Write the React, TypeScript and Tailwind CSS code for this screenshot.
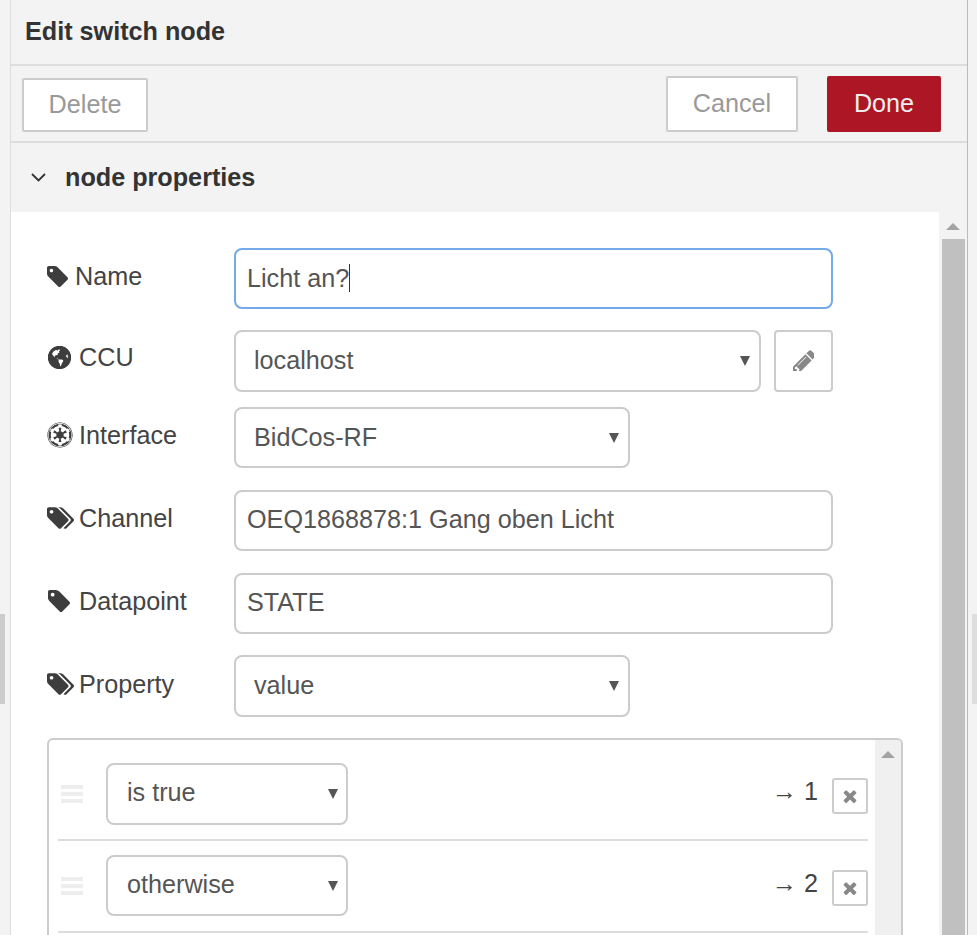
import React from 'react';
import { FaGlobeAmericas, FaEmpire } from 'react-icons/fa';

const TagIcon = ({ className }: { className: string }) => (
  <svg viewBox="128 128 1515 1515" className={className} fill="currentColor">
    <path d="M576 448q0-53-37.5-90.5t-90.5-37.5-90.5 37.5-37.5 90.5 37.5 90.5 90.5 37.5 90.5-37.5 37.5-90.5zm1067 576q0 53-37 90l-491 492q-39 37-91 37-53 0-90-37l-715-716q-38-37-64.5-101t-26.5-117v-416q0-52 38-90t90-38h416q53 0 117 26.5t102 64.5l715 714q37 39 37 91z" />
  </svg>
);

const TagsIcon = ({ className }: { className: string }) => (
  <svg viewBox="-64 128 1899 1515" className={className} fill="currentColor">
    <path d="M384 448q0-53-37.5-90.5t-90.5-37.5-90.5 37.5-37.5 90.5 37.5 90.5 90.5 37.5 90.5-37.5 37.5-90.5zm1067 576q0 53-37 90l-491 492q-39 37-91 37-53 0-90-37l-715-716q-38-37-64.5-101t-26.5-117v-416q0-52 38-90t90-38h416q53 0 117 26.5t102 64.5l715 714q37 39 37 91zm384 0q0 53-37 90l-491 492q-38 38-91 38-36 0-59-14t-53-45l470-470q37-37 37-90 0-52-37-91l-715-714q-38-38-102-64.5t-117-26.5h224q53 0 117 26.5t102 64.5l715 714q37 39 37 91z" />
  </svg>
);

const PencilIcon = () => (
  <svg viewBox="128 128 1408 1408" className="w-[21px] h-[21px] mb-[2px]" fill="currentColor">
    <path d="M491 1536l91-91-235-235-91 91v107h128v128h107zm523-928q0-22-22-22-10 0-17 7l-542 542q-7 7-7 17 0 22 22 22 10 0 17-7l542-542q7-7 7-17zm-54-192l416 416-832 832h-416v-416zm683 96q0 53-37 90l-166 166-416-416 166-165q36-38 90-38 53 0 91 38l235 234q37 39 37 91z" />
  </svg>
);

const TimesIcon = () => (
  <svg viewBox="238 238 1316 1316" className="w-[14px] h-[14px]" fill="currentColor">
    <path d="M1490 1322q0 40-28 68l-136 136q-28 28-68 28t-68-28l-294-294-294 294q-28 28-68 28t-68-28l-136-136q-28-28-28-68t28-68l294-294-294-294q-28-28-28-68t28-68l136-136q28-28 68-28t68 28l294 294 294-294q28-28 68-28t68 28l136 136q28 28 28 68t-28 68l-294 294 294 294q28 28 28 68z" />
  </svg>
);

const Arrow = ({ size = 'big' }: { size?: 'big' | 'small' }) => (
  <span
    className={`absolute border-x-[5px] border-t-[10px] border-x-transparent border-t-[#555] ${
      size === 'big' ? 'right-[9px] top-[24px]' : 'right-[8px] top-[24px]'
    }`}
  />
);

const Select = ({ value, className }: { value: string; className: string }) => (
  <div className={`relative bg-white border-2 border-[#ccc] rounded-[8px] text-[#555] text-[25.2px] leading-[56px] ${className}`}>
    {value}
    <Arrow />
  </div>
);

const Row = ({ icon, label, labelClass, className, children }: any) => (
  <div className={`flex ${className}`}>
    <label className={`w-[187px] flex items-center text-[#444] text-[25.2px] leading-[28px] h-[28px] ${labelClass}`}>
      {icon}
      {label}
    </label>
    {children}
  </div>
);

const RuleRow = ({ value, port, className, selectClass }: { value: string; port: number; className: string; selectClass: string }) => (
  <div className={`flex items-start border-b-2 border-[#ddd] ${className}`}>
    {/* drag handle */}
    <div className="w-[22px] ml-[3px] mt-[22px] flex flex-col gap-[3px]">
      <div className="h-[4px] bg-[#eee]" />
      <div className="h-[4px] bg-[#eee]" />
      <div className="h-[4px] bg-[#eee]" />
    </div>
    <div className={`relative ml-[23px] w-[242px] bg-white border-2 border-[#ccc] rounded-[8px] pl-[19px] text-[#555] text-[25.2px] leading-[54px] ${selectClass}`}>
      {value}
      <Arrow size="small" />
    </div>
    <div className="ml-auto flex items-start">
      <span className="mt-[10px] text-[#444] text-[25.2px] leading-[36px]">→ {port}</span>
      <div className="ml-[14px] mt-[15px] w-[36px] h-[36px] bg-white border-2 border-[#ccc] rounded-[3px] flex items-center justify-center text-[#888]">
        <TimesIcon />
      </div>
    </div>
  </div>
);

export default function App() {
  return (
    <div className="relative h-[935px] overflow-hidden bg-[#f3f3f3] font-['Liberation_Sans',Arial,sans-serif] flex">
      {/* resize handles either side of the tray */}
      <div className="absolute left-0 top-[614px] w-[5px] h-[90px] bg-[#ccc]" />
      <div className="absolute right-0 top-[614px] w-[5px] h-[90px] bg-[#ddd]" />

      <div className="ml-[10px] w-[958px] h-[935px] border-l border-l-[#ddd] border-r border-r-[#bbb] flex flex-col">
        <div className="h-[66px] border-b-2 border-[#ddd] pl-[14px] pt-[16px] text-[#333] text-[25.2px] leading-[30px] font-bold">
          Edit switch node
        </div>

        <div className="h-[77px] border-b-2 border-[#ddd] flex pl-[11px] pr-[26px]">
          <button className="mt-[12px] w-[126px] h-[54px] bg-white border-2 border-[#ccc] rounded-[2px] text-[#999] text-[25.2px]">Delete</button>
          <button className="ml-auto mt-[10px] w-[132px] h-[56px] bg-white border-2 border-[#ccc] rounded-[2px] text-[#999] text-[25.2px]">Cancel</button>
          <button className="ml-[29px] mt-[10px] w-[114px] h-[56px] bg-[#ad1625] rounded-[2px] text-[#eee] text-[25.2px]">Done</button>
        </div>

        <div className="h-[69px] flex items-center pl-[20px] text-[#333] text-[25.2px] font-bold">
          <svg width="15" height="9" viewBox="0 0 15 9" className="mr-[19px]" fill="none" stroke="#333" strokeWidth="1.8">
            <path d="M1 1 L7.5 7.5 L14 1" />
          </svg>
          node properties
        </div>

        <div className="flex flex-1 min-h-0">
          <div className="w-[928px] bg-white pl-[36px] pt-[36px] overflow-hidden">
            <Row
              label="Name"
              labelClass="mt-[14px]"
              icon={<TagIcon className="w-[21px] h-[21px] mr-[7px] text-[#3d3d3d]" />}
            >
              <div className="w-[599px] h-[61px] bg-white border-2 border-[#74a9ea] rounded-[8px] pl-[11px] text-[#555] text-[25.2px] leading-[54px] flex items-center pb-[2px]">
                Licht an?
                <span className="w-[1px] h-[28px] bg-[#333]" />
              </div>
            </Row>

            <Row
              className="mt-[21px]"
              label="CCU"
              labelClass="mt-[13px]"
              icon={<FaGlobeAmericas stroke="currentColor" strokeWidth={24} className="w-[23px] h-[23px] ml-[1px] mr-[8px] text-[#3d3d3d]" />}
            >
              <Select value="localhost" className="w-[527px] h-[62px] pl-[18px]" />
              <div className="ml-[13px] w-[59px] h-[62px] bg-white border-2 border-[#ccc] rounded-[4px] flex items-center justify-center text-[#888]">
                <PencilIcon />
              </div>
            </Row>

            <Row
              className="mt-[15px]"
              label="Interface"
              labelClass="mt-[14px]"
              icon={<FaEmpire className="w-[26px] h-[26px] mr-[6px] text-[#3d3d3d]" />}
            >
              <Select value="BidCos-RF" className="w-[396px] h-[61px] pl-[18px]" />
            </Row>

            <Row
              className="mt-[22px]"
              label="Channel"
              labelClass="mt-[14px]"
              icon={<TagsIcon className="w-[27px] h-[22px] mr-[5px] text-[#3d3d3d]" />}
            >
              <div className="w-[599px] h-[61px] bg-white border-2 border-[#ccc] rounded-[8px] pl-[11px] text-[#555] text-[25.2px] leading-[54px]">
                OEQ1868878:1 Gang oben Licht
              </div>
            </Row>

            <Row
              className="mt-[22px]"
              label="Datapoint"
              labelClass="mt-[14px]"
              icon={<TagIcon className="w-[22px] h-[22px] ml-[1px] mr-[9px] text-[#3d3d3d]" />}
            >
              <div className="w-[599px] h-[61px] bg-white border-2 border-[#ccc] rounded-[8px] pl-[11px] text-[#555] text-[25.2px] leading-[54px]">
                STATE
              </div>
            </Row>

            <Row
              className="mt-[21px]"
              label="Property"
              labelClass="mt-[15px]"
              icon={<TagsIcon className="w-[27px] h-[22px] mr-[5px] text-[#3d3d3d]" />}
            >
              <Select value="value" className="w-[396px] h-[62px] pl-[18px]" />
            </Row>

            <div className="mt-[21px] w-[856px] h-[260px] border-2 border-[#ccc] rounded-[6px] flex overflow-hidden">
              <div className="w-[826px] shrink-0 pl-[9px] pr-[7px] pt-[23px]">
                <RuleRow value="is true" port={1} className="h-[78px]" selectClass="h-[62px]" />
                <RuleRow value="otherwise" port={2} className="h-[92px] pt-[14px]" selectClass="h-[61px]" />
              </div>
              <div className="w-[26px] bg-[#f0f0f0] flex justify-center pt-[11px]">
                <span className="h-0 border-x-[7px] border-b-[7px] border-x-transparent border-b-[#a3a3a3]" />
              </div>
            </div>
          </div>

          {/* outer scrollbar */}
          <div className="flex-1 flex flex-col items-center">
            <span className="mt-[11px] border-x-[7px] border-b-[7px] border-x-transparent border-b-[#a3a3a3]" />
            <div className="mt-[9px] w-[23px] flex-1 bg-[#c0c0c0]" />
          </div>
        </div>
      </div>
    </div>
  );
}
